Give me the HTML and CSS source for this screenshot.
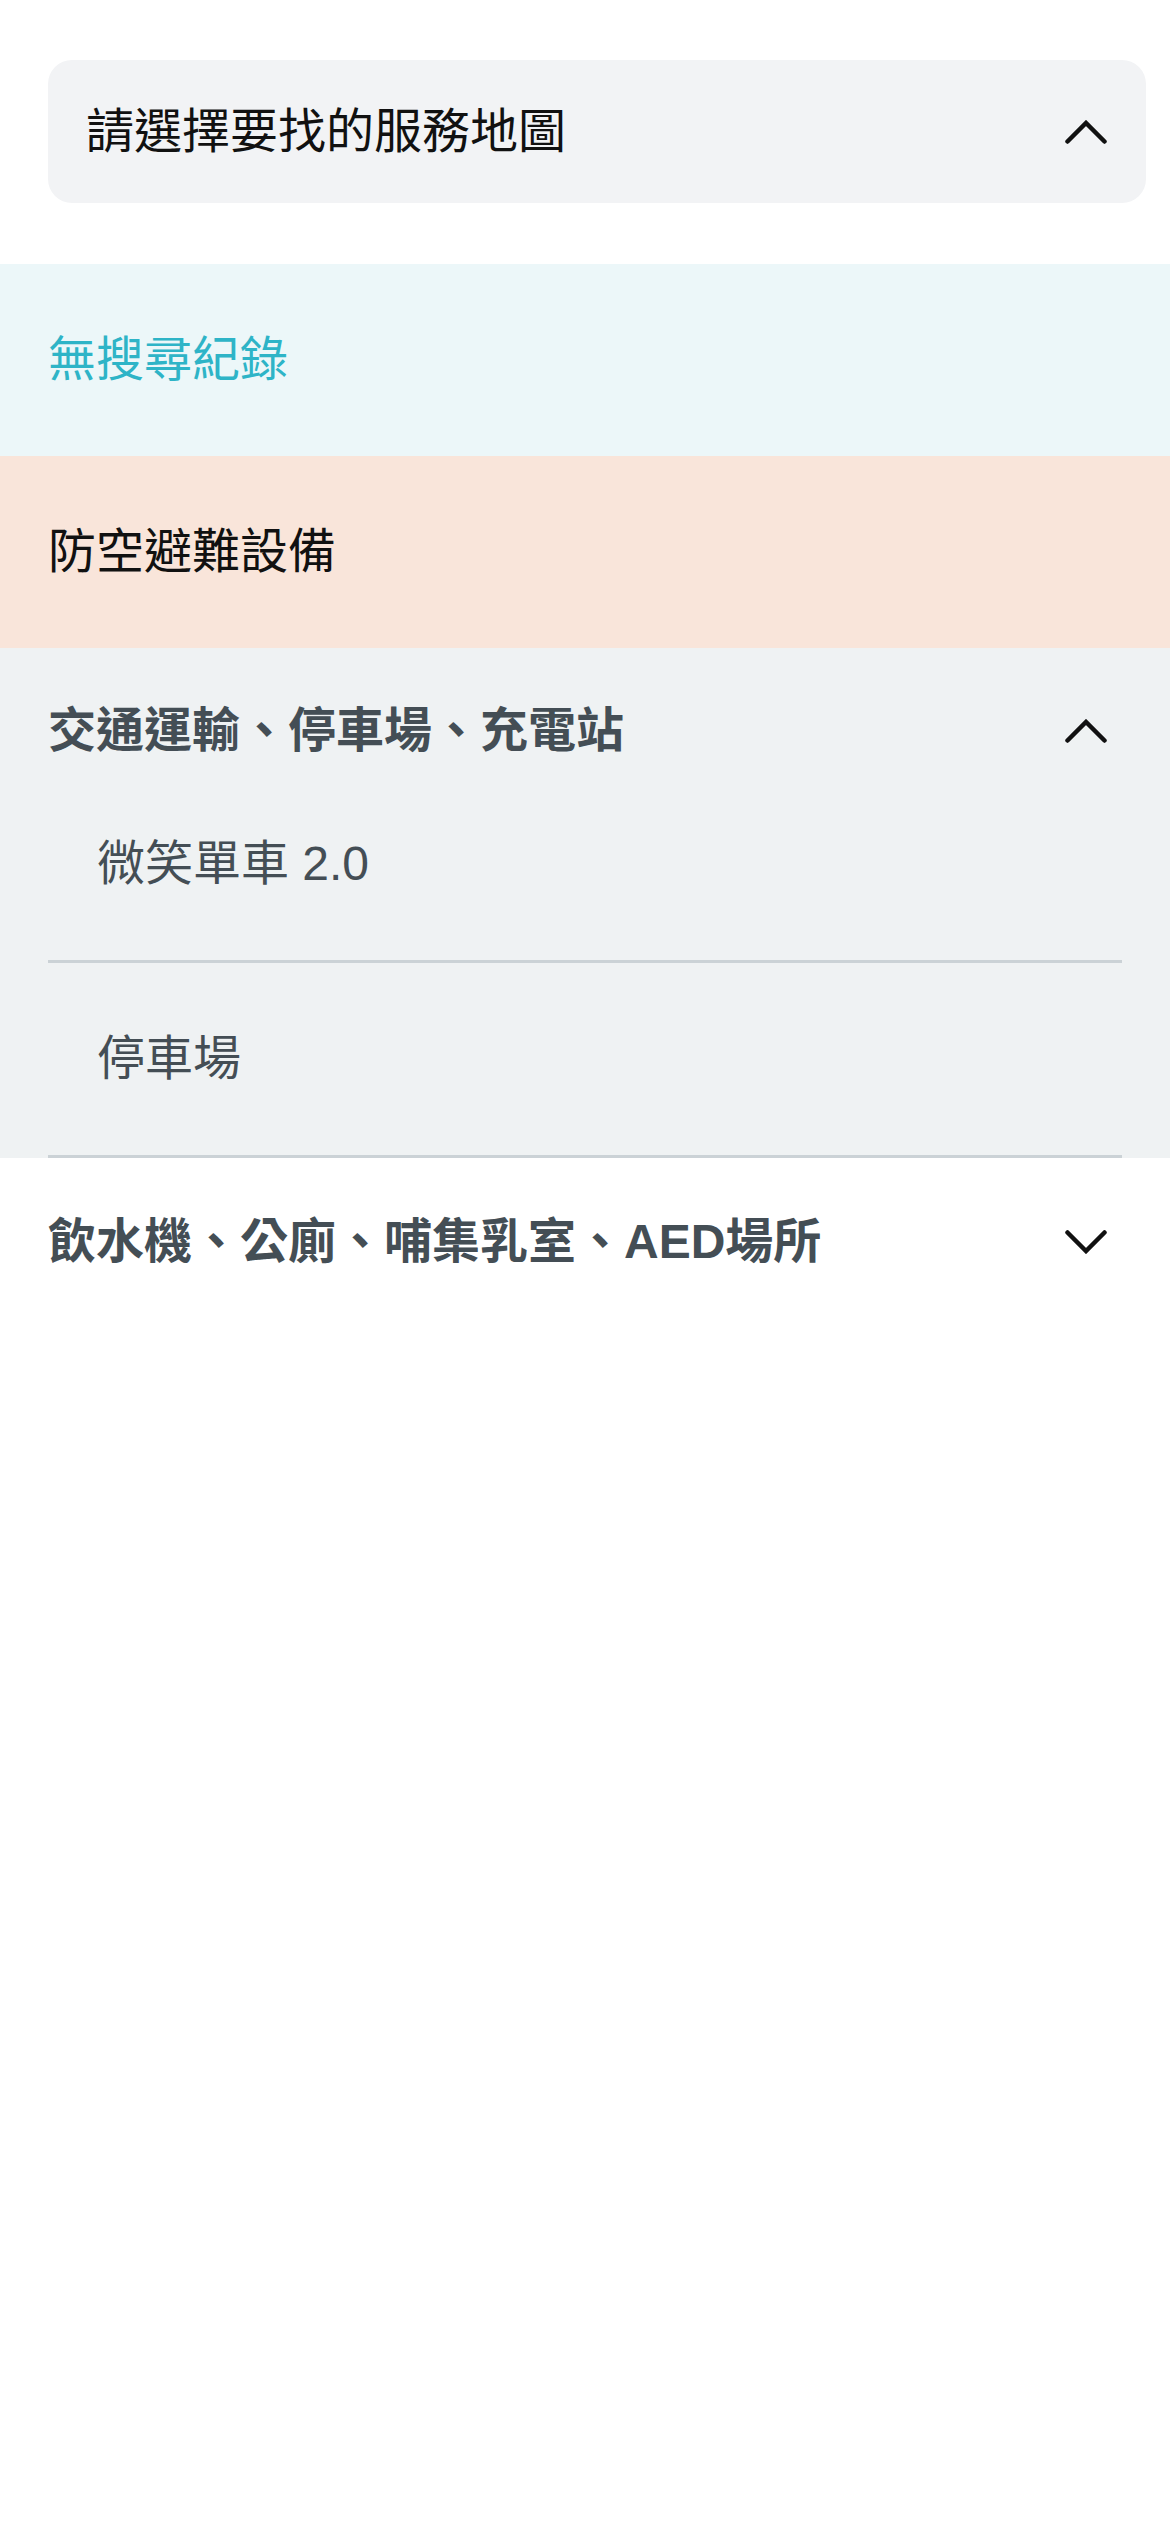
FILE: index.html
```html
<!DOCTYPE html>
<html lang="zh-Hant">
<head>
  <meta charset="UTF-8">
  <meta name="viewport" content="width=device-width, initial-scale=1.0">
  <title>服務地圖</title>
  <link rel="stylesheet" href="styles.css">
</head>
<body>

  <div class="picker">
    <div class="picker-box">
      <span>請選擇要找的服務地圖</span>
      <svg class="chevron" viewBox="0 0 42 24" width="42" height="24">
        <polyline points="2.5,21.5 21,3 39.5,21.5" />
      </svg>
    </div>
  </div>

  <div class="history">無搜尋紀錄</div>

  <div class="shelter">防空避難設備</div>

  <div class="group open">
    <div class="group-head">
      <span>交通運輸、停車場、充電站</span>
      <svg class="chevron" viewBox="0 0 42 24" width="42" height="24">
        <polyline points="2.5,21.5 21,3 39.5,21.5" />
      </svg>
    </div>
    <div class="item">微笑單車 2.0</div>
    <div class="item">停車場</div>
  </div>

  <div class="group">
    <div class="group-head">
      <span>飲水機、公廁、哺集乳室、AED場所</span>
      <svg class="chevron" viewBox="0 0 42 24" width="42" height="24">
        <polyline points="2.5,2.5 21,21 39.5,2.5" />
      </svg>
    </div>
  </div>

</body>
</html>
```

FILE: styles.css
```css
/* Reset styling */
* {
  margin: 0;
  padding: 0;
  box-sizing: border-box;
}

body {
  font-family: "Liberation Sans", "Noto Sans CJK TC", sans-serif;
  font-size: 48px;
  line-height: 48px;
  color: #111;
  background: #fff;
  width: 1170px;
}

.chevron {
  flex-shrink: 0;
  display: block;
}

.chevron polyline {
  fill: none;
  stroke: #111;
  stroke-width: 4.5;
  stroke-linecap: round;
  stroke-linejoin: miter;
}

/* Top select */
.picker {
  padding: 60px 24px 61px 48px;
}

.picker-box {
  height: 143px;
  background-color: #f2f3f5;
  border-radius: 24px;
  padding: 0 39px 0 38px;
  display: flex;
  align-items: center;
  justify-content: space-between;
}

.history,
.shelter {
  height: 192px;
  padding: 0 48px;
  display: flex;
  align-items: center;
}

.history {
  background-color: #ecf7f9;
  color: #2eb4c7;
}

.shelter {
  background-color: #f9e5da;
  color: #111;
}

/* Category groups */
.group {
  color: #444e55;
}

.group.open {
  background-color: #eff2f3;
}

.group-head {
  display: flex;
  align-items: center;
  justify-content: space-between;
  padding: 60px 63px 60px 48px;
  font-weight: bold;
}

.group.open .group-head {
  padding-top: 59px;
  padding-bottom: 13px;
}

.item {
  height: 195px;
  margin: 0 48px;
  padding-left: 49px;
  border-bottom: 3px solid #cbd2d6;
  display: flex;
  align-items: center;
}
```
